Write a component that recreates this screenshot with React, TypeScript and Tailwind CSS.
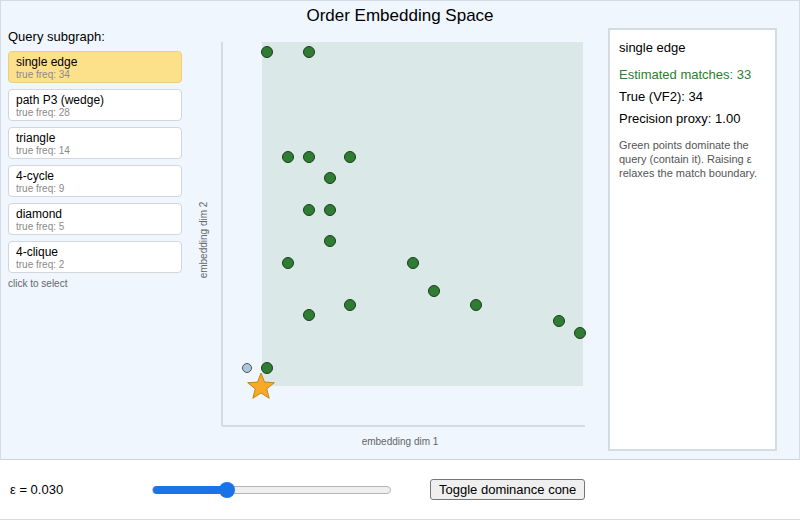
import React from "react";

const items = [
  ["single edge", 34],
  ["path P3 (wedge)", 28],
  ["triangle", 14],
  ["4-cycle", 9],
  ["diamond", 5],
  ["4-clique", 2],
] as const;

const pts = [
  [267, 52], [309, 52], [288, 157], [309, 157], [350, 157], [330, 178], [309, 210], [330, 210],
  [330, 241], [288, 263], [413, 263], [434, 291], [350, 305], [476, 305], [309, 315], [559, 321],
  [580, 333], [267, 368],
];

function starPath(cx: number, cy: number, R: number, r: number) {
  const p: string[] = [];
  for (let i = 0; i < 10; i++) {
    const a = -Math.PI / 2 + (i * Math.PI) / 5;
    const rad = i % 2 ? r : R;
    p.push(`${(cx + rad * Math.cos(a)).toFixed(1)},${(cy + rad * Math.sin(a)).toFixed(1)}`);
  }
  return p.join(" ");
}

export default function App() {
  const X0 = 190, Y0 = 27;
  return (
    <div className="w-[800px] h-[522px] bg-white overflow-hidden" style={{ fontFamily: "Arial, 'Liberation Sans', sans-serif" }}>
      <div className="h-[460px] bg-[#eff6fe] border border-[#d5dbe3] border-b-[#cfd4da] flex flex-col">
        <div className="text-[17px] text-black text-center pt-[4px] h-[26px] leading-[22px]">Order Embedding Space</div>
        <div className="flex flex-1">
          <div className="w-[174px] ml-[7px] flex flex-col">
            <div className="text-[13px] leading-[16px] mt-[2px] mb-[6px]">Query subgraph:</div>
            {items.map(([n, f], i) => (
              <div key={n} className={`h-[32px] mb-[6px] rounded-[4px] border px-[7px] pt-[3px] ${i === 0 ? "bg-[#fde18a] border-[#e8cf85]" : "bg-white border-[#d3d6da]"}`}>
                <div className="text-[12px] leading-[14px] text-black">{n}</div>
                <div className="text-[10px] leading-[12px] text-[#8a8a8a]">true freq: {f}</div>
              </div>
            ))}
            <div className="text-[10px] text-[#666] -mt-[3px]">click to select</div>
          </div>
          <svg width="418" height="430" className="ml-[8px] shrink-0" viewBox={`${X0} ${Y0} 418 430`}>
            <rect x={262} y={42} width={321} height={344} fill="#dae8e8" />
            <line x1={222} y1={42} x2={222} y2={426} stroke="#d5dbe3" strokeWidth={2} />
            <line x1={222} y1={426} x2={585} y2={426} stroke="#d5dbe3" strokeWidth={2} />
            <text x={400} y={445} textAnchor="middle" fontSize={10} fill="#666" fontFamily="Arial, 'Liberation Sans', sans-serif">embedding dim 1</text>
            <text x={207} y={240} textAnchor="middle" fontSize={10} fill="#666" transform="rotate(-90 207 240)" fontFamily="Arial, 'Liberation Sans', sans-serif">embedding dim 2</text>
            {pts.map(([x, y], i) => (
              <circle key={i} cx={x} cy={y} r={5.5} fill="#2e7d32" stroke="#1b3d1e" strokeWidth={1} />
            ))}
            <circle cx={247} cy={368} r={4.5} fill="#a8c8e0" stroke="#555" strokeWidth={1} />
            <polygon points={starPath(261, 387, 14, 6)} fill="#f7a928" stroke="#c48516" strokeWidth={1} />
          </svg>
          <div className="w-[169px] h-[423px] mt-[1px] bg-white border-2 border-[#d5dbe3] px-[9px] pt-[9px]">
            <div className="text-[13px] leading-[18px] text-black">single edge</div>
            <div className="text-[13px] leading-[18px] text-[#2e7d32] mt-[9px]">Estimated matches: 33</div>
            <div className="text-[13px] leading-[18px] text-black mt-[4px]">True (VF2): 34</div>
            <div className="text-[13px] leading-[18px] text-black mt-[4px]">Precision proxy: 1.00</div>
            <div className="text-[11px] text-[#555] mt-[10px] leading-[14px]">Green points dominate the query (contain it). Raising ε relaxes the match boundary.</div>
          </div>
        </div>
      </div>
      <div className="h-[60px] border-b border-[#d5dbe3] flex items-center">
        <div className="text-[13px] ml-[10px] w-[142px]">ε = 0.030</div>
        <div className="relative w-[239px] h-[8px] rounded-full bg-[#efefef] border border-[#b5b5b5]">
          <div className="absolute left-0 top-[-1px] h-[8px] w-[74px] rounded-full bg-[#1a73e8]" />
          <div className="absolute left-[66px] top-[-5px] w-[16px] h-[16px] rounded-full bg-[#1a73e8]" />
        </div>
        <button className="ml-[39px] h-[21px] px-[8px] text-[13px] bg-[#efefef] border border-[#767676] rounded-[3px] leading-[18px]">Toggle dominance cone</button>
      </div>
    </div>
  );
}
